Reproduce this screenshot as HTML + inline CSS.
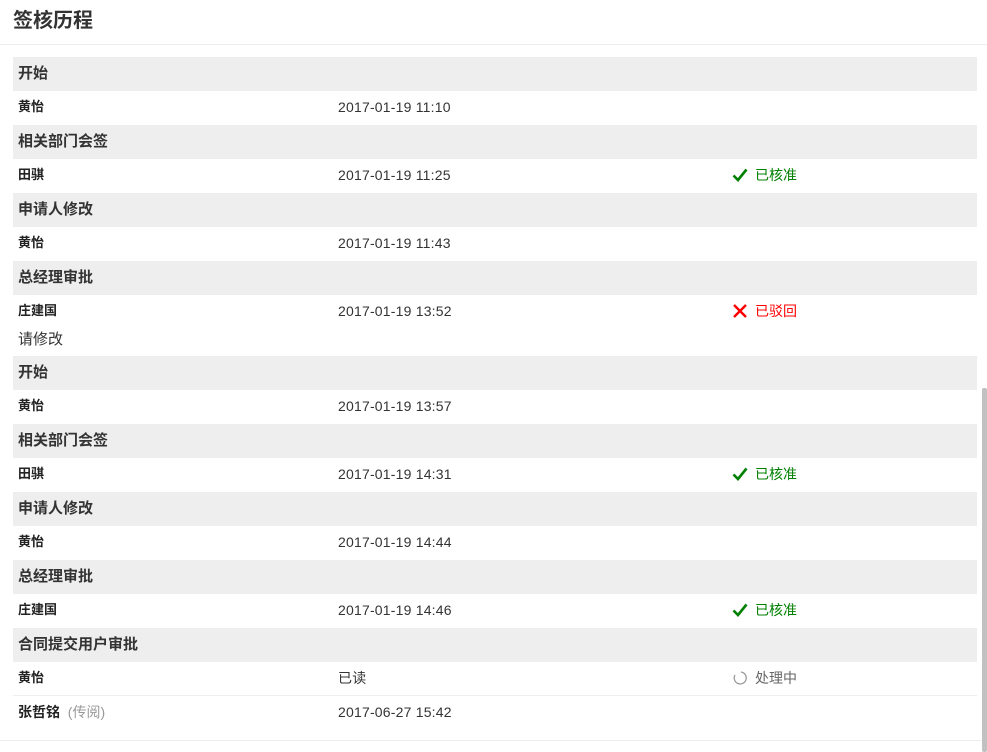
<!DOCTYPE html>
<html><head><meta charset="utf-8"><style>
*{margin:0;padding:0;box-sizing:border-box}
body{width:987px;height:752px;overflow:hidden;background:#fff;font-family:"Liberation Sans","Noto Sans CJK SC",sans-serif;color:#333;position:relative}
.t{position:absolute;left:13px;top:6px;font-size:20px;font-weight:bold;color:#333;line-height:30px}
.hl{position:absolute;left:0;top:44px;width:987px;height:1px;background:#eee}
.r{position:absolute;left:13px;width:964px;height:34px}
.g{background:#eee;font-size:15px;font-weight:bold;line-height:34px;padding-left:5px}
.w{font-size:13px;line-height:32px}
.w .n{position:absolute;left:5px;font-weight:bold;color:#222}
.w .d{position:absolute;left:325px;font-size:14px;letter-spacing:0.2px;color:#333}
.w .s{position:absolute;left:719px;font-size:14px;display:flex;align-items:center;height:32px}
.s svg{margin-right:7px}
.ok{color:#008000}.no{color:#f00}.pr{color:#666}
.c{position:absolute;left:18px;top:326px;font-size:15px;line-height:28px}
.sb{position:absolute;left:982px;top:388px;width:5px;height:364px;background:#c1c1c1;border-radius:2px}
</style></head><body>
<div class="t">签核历程</div><div class="hl"></div>

<div class="r g" style="top:57px">开始</div>
<div class="r w" style="top:91px"><span class="n">黄怡</span><span class="d">2017-01-19 11:10</span></div>
<div class="r g" style="top:125px">相关部门会签</div>
<div class="r w" style="top:159px"><span class="n">田骐</span><span class="d">2017-01-19 11:25</span><span class="s ok"><svg width="16" height="14" viewBox="0 0 16 14"><path d="M1.5 7.5 L6 12 L14.5 1.5" stroke="#008000" stroke-width="2.6" fill="none"/></svg>已核准</span></div>
<div class="r g" style="top:193px">申请人修改</div>
<div class="r w" style="top:227px"><span class="n">黄怡</span><span class="d">2017-01-19 11:43</span></div>
<div class="r g" style="top:261px">总经理审批</div>
<div class="r w" style="top:295px"><span class="n">庄建国</span><span class="d">2017-01-19 13:52</span><span class="s no"><svg width="16" height="14" viewBox="0 0 16 14"><path d="M2 1 L14 13 M14 1 L2 13" stroke="#f00" stroke-width="2.4" fill="none"/></svg>已驳回</span></div>
<div class="c">请修改</div>
<div class="r g" style="top:356px">开始</div>
<div class="r w" style="top:390px"><span class="n">黄怡</span><span class="d">2017-01-19 13:57</span></div>
<div class="r g" style="top:424px">相关部门会签</div>
<div class="r w" style="top:458px"><span class="n">田骐</span><span class="d">2017-01-19 14:31</span><span class="s ok"><svg width="16" height="14" viewBox="0 0 16 14"><path d="M1.5 7.5 L6 12 L14.5 1.5" stroke="#008000" stroke-width="2.6" fill="none"/></svg>已核准</span></div>
<div class="r g" style="top:492px">申请人修改</div>
<div class="r w" style="top:526px"><span class="n">黄怡</span><span class="d">2017-01-19 14:44</span></div>
<div class="r g" style="top:560px">总经理审批</div>
<div class="r w" style="top:594px"><span class="n">庄建国</span><span class="d">2017-01-19 14:46</span><span class="s ok"><svg width="16" height="14" viewBox="0 0 16 14"><path d="M1.5 7.5 L6 12 L14.5 1.5" stroke="#008000" stroke-width="2.6" fill="none"/></svg>已核准</span></div>
<div class="r g" style="top:628px">合同提交用户审批</div>
<div class="r w" style="top:662px;border-bottom:1px solid #eee"><span class="n">黄怡</span><span class="d">已读</span><span class="s pr"><svg width="16" height="16" viewBox="0 0 16 16"><path d="M9 2 A6 6 0 1 1 3 5" stroke="#999" stroke-width="1.3" fill="none"/></svg>处理中</span></div>
<div class="r w" style="top:696px;height:32px;line-height:32px"><span class="n" style="font-size:14px">张哲铭 &nbsp;<span style="font-weight:normal;color:#999;font-size:14px">(传阅)</span></span><span class="d">2017-06-27 15:42</span></div>
<div style="position:absolute;left:0;top:740px;width:987px;height:1px;background:#eee"></div>
<div class="sb"></div>
</body></html>
